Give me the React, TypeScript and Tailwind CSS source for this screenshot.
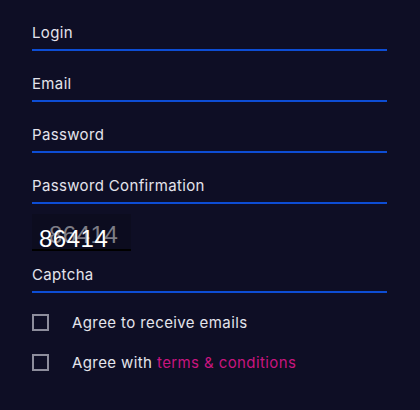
import React from 'react';

const fields = ['Login', 'Email', 'Password', 'Password Confirmation'];

const Field: React.FC<{ label: string; className?: string }> = ({ label, className }) => (
  <div className={'border-b-2 border-[#0d4dd4] pb-[6px] ' + (className ?? '')}>
    <span className="block text-[15px] leading-[20px] tracking-[0.35px] text-[#e4e4ec]">{label}</span>
  </div>
);

const Check: React.FC<{ children: React.ReactNode }> = ({ children }) => (
  <label className="flex items-center h-[17px]">
    <span className="w-[17px] h-[17px] border-2 border-[#8d8d9c] shrink-0" />
    <span className="ml-[23px] text-[15px] leading-[20px] tracking-[0.4px] text-[#e4e4ec]">{children}</span>
  </label>
);

export default function App() {
  return (
    <div className="w-[420px] h-[410px] bg-[#0e0e25] font-['Inter',sans-serif]">
      <form className="flex flex-col pl-[32px] pr-[33px] pt-[23px]">
        <div className="flex flex-col gap-[23px]">
          {fields.map((f) => (
            <Field key={f} label={f} />
          ))}
        </div>

        <div className="relative mt-[10px] w-[99px] h-[37px] bg-[#0c0c1f] border-b-2 border-black overflow-hidden font-['Liberation_Sans',sans-serif]">
          <span className="absolute left-[17px] top-[9px] text-[24px] leading-[24px] font-light text-[#7d7d86] tracking-[0.5px]">
            86414
          </span>
          <span className="absolute left-[7px] top-[13px] text-[24px] leading-[24px] font-light text-white tracking-[0.5px]">
            86414
          </span>
        </div>

        <Field label="Captcha" className="mt-[14px]" />

        <div className="flex flex-col gap-[23px] mt-[21px]">
          <Check>Agree to receive emails</Check>
          <Check>
            Agree with <span className="text-[#c8157f]">terms &amp; conditions</span>
          </Check>
        </div>
      </form>
    </div>
  );
}
